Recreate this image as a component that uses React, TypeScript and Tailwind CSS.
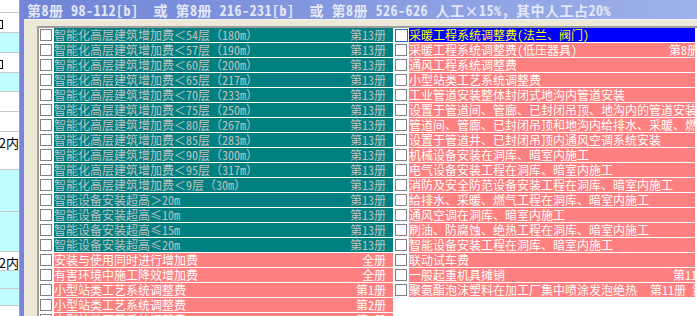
const cjk = "font-['Noto_Sans_Mono_CJK_SC','Noto_Sans_CJK_SC',monospace]";

type Kind = "teal" | "red" | "sel";
type Row = { label: string; tag?: string; kind: Kind; tagClass?: string };

const leftRows: Row[] = [
  { label: "智能化高层建筑增加费＜54层（180m）", tag: "第13册", kind: "teal" },
  { label: "智能化高层建筑增加费＜57层（190m）", tag: "第13册", kind: "teal" },
  { label: "智能化高层建筑增加费＜60层（200m）", tag: "第13册", kind: "teal" },
  { label: "智能化高层建筑增加费＜65层（217m）", tag: "第13册", kind: "teal" },
  { label: "智能化高层建筑增加费＜70层（233m）", tag: "第13册", kind: "teal" },
  { label: "智能化高层建筑增加费＜75层（250m）", tag: "第13册", kind: "teal" },
  { label: "智能化高层建筑增加费＜80层（267m）", tag: "第13册", kind: "teal" },
  { label: "智能化高层建筑增加费＜85层（283m）", tag: "第13册", kind: "teal" },
  { label: "智能化高层建筑增加费＜90层（300m）", tag: "第13册", kind: "teal" },
  { label: "智能化高层建筑增加费＜95层（317m）", tag: "第13册", kind: "teal" },
  { label: "智能化高层建筑增加费＜9层（30m）", tag: "第13册", kind: "teal" },
  { label: "智能设备安装超高＞20m", tag: "第13册", kind: "teal" },
  { label: "智能设备安装超高≤10m", tag: "第13册", kind: "teal" },
  { label: "智能设备安装超高≤15m", tag: "第13册", kind: "teal" },
  { label: "智能设备安装超高≤20m", tag: "第13册", kind: "teal" },
  { label: "安装与使用同时进行增加费", tag: "全册", kind: "red" },
  { label: "有害环境中施工降效增加费", tag: "全册", kind: "red" },
  { label: "小型站类工艺系统调整费", tag: "第1册", kind: "red" },
  { label: "小型站类工艺系统调整费", tag: "第2册", kind: "red" },
  { label: "小型站类工艺系统调整费", tag: "第3册", kind: "red" },
];

const rightRows: Row[] = [
  { label: "采暖工程系统调整费(法兰、阀门)", kind: "sel" },
  { label: "采暖工程系统调整费(低压器具)", tag: "第8册", kind: "red", tagClass: "ml-[92px]" },
  { label: "通风工程系统调整费", kind: "red" },
  { label: "小型站类工艺系统调整费", kind: "red" },
  { label: "工业管道安装整体封闭式地沟内管道安装", kind: "red" },
  { label: "设置于管道间、管廊、已封闭吊顶、地沟内的管道安装", kind: "red" },
  { label: "管道间、管廊、已封闭吊顶和地沟内给排水、采暖、燃气", kind: "red" },
  { label: "设置于管道井、已封闭吊顶内通风空调系统安装", kind: "red" },
  { label: "机械设备安装在洞库、暗室内施工", kind: "red" },
  { label: "电气设备安装工程在洞库、暗室内施工", kind: "red" },
  { label: "消防及安全防范设备安装工程在洞库、暗室内施工", kind: "red" },
  { label: "给排水、采暖、燃气工程在洞库、暗室内施工", kind: "red" },
  { label: "通风空调在洞库、暗室内施工", kind: "red" },
  { label: "刷油、防腐蚀、绝热工程在洞库、暗室内施工", kind: "red" },
  { label: "智能设备安装工程在洞库、暗室内施工", kind: "red" },
  { label: "联动试车费", kind: "red" },
  { label: "一般起重机具摊销", tag: "第11册", kind: "red", tagClass: "ml-[168px]" },
  { label: "聚氨酯泡沫塑料在加工厂集中喷涂发泡绝热", tag: "第11册 第", kind: "red", tagClass: "ml-[13px]" },
];

const sideRows = [
  { h: "h-[13px]", bg: "bg-white" },
  { h: "h-[20px]", bg: "bg-white", icon: true },
  { h: "h-[20px]", bg: "bg-[#c0ffff]" },
  { h: "h-[20px]", bg: "bg-white", icon: true },
  { h: "h-[19px]", bg: "bg-[#c0ffff]" },
  { h: "h-[20px]", bg: "bg-white" },
  { h: "h-[20px]", bg: "bg-white" },
  { h: "h-[38px]", bg: "bg-white", text: "2内" },
  { h: "h-[42px]", bg: "bg-[#c0ffff]" },
  { h: "h-[40px]", bg: "bg-[#c0ffff]" },
  { h: "h-[19px]", bg: "bg-white", text: "2内" },
  { h: "h-[18px]", bg: "bg-[#c0ffff]" },
  { h: "h-[17px]", bg: "bg-[#c0ffff]" },
  { h: "h-[20px]", bg: "bg-white" },
];

const barStyle: Record<Kind, string> = {
  teal: "bg-[#008080] text-[#c0c0c0]",
  red: "bg-[#ff8080] text-white",
  sel: "bg-[#0000ff] text-[#ffff00]",
};

const Check = ({ focused }: { focused?: boolean }) => (
  <div
    className={
      focused
        ? "w-[13px] h-[13px] border border-[#316ac5] bg-white shrink-0"
        : "w-[12px] h-[12px] border border-[#808080] bg-white shrink-0"
    }
  />
);

const LeftItem = ({ row }: { row: Row }) => (
  <div className="flex items-center h-[15px] pb-[1px]">
    <div className="w-[15px] pl-[1px] flex items-center">
      <Check />
    </div>
    <div className={`flex-1 h-[14px] flex items-center justify-between pr-[7px] ${barStyle[row.kind]}`}>
      <span className="whitespace-pre">{row.label}</span>
      <span>{row.tag}</span>
    </div>
  </div>
);

const RightItem = ({ row }: { row: Row }) => (
  <div className="flex items-center h-[15px] pb-[1px]">
    <div className="w-[14px] flex items-center">
      <Check focused={row.kind === "sel"} />
    </div>
    <div className={`flex-1 h-[14px] flex items-center overflow-hidden whitespace-pre ${barStyle[row.kind]}`}>
      <span>{row.label}</span>
      {row.tag && <span className={row.tagClass}>{row.tag}</span>}
    </div>
  </div>
);

export default function App() {
  return (
    <div className="w-[697px] h-[316px] overflow-hidden flex bg-white">
      <div className="w-[20px] shrink-0 overflow-hidden border-r border-[#a0a0a0] font-['Noto_Sans_CJK_SC',sans-serif] text-[13px] text-black">
        {sideRows.map((r, i) => (
          <div key={i} className={`${r.h} ${r.bg} border-b border-[#c8c8c8] relative flex items-start justify-end overflow-hidden`}>
            {r.icon && (
              <div className="absolute left-[-6px] top-[7px] w-[9px] h-[9px] border border-black bg-white flex items-center justify-center text-[8px] leading-none">
                +
              </div>
            )}
            {r.text && <span className="whitespace-nowrap leading-[16px] pt-[3px]">{r.text}</span>}
          </div>
        ))}
      </div>
      <div className="w-[4px] shrink-0 bg-[#7b84dc]" />
      <div className={`flex-1 flex flex-col bg-[#ece9d8] min-w-0 ${cjk}`}>
        <div className="h-[20px] shrink-0 bg-gradient-to-r from-[#6f84d6] to-[#9fb1ea] flex items-center pl-[3px] border-b border-[#f4f4f4]">
          <span className="whitespace-pre text-[14px] font-bold text-[#e2e6f6] leading-none tracking-[0.5px]">
            第8册 98-112[b]  或 第8册 216-231[b]  或 第8册 526-626 人工×15%，其中人工占20%
          </span>
        </div>
        <div className="flex-1 mt-[6px] ml-[13px] border-t-2 border-l-2 border-[#9d9d9d] bg-white overflow-hidden text-[12px] leading-[14px]">
          <div className="flex">
            <div className="w-[354px] shrink-0 flex flex-col">
              {leftRows.map((r, i) => (
                <LeftItem key={i} row={r} />
              ))}
            </div>
            <div className="flex-1 min-w-0 flex flex-col pl-[2px] pr-[2px]">
              {rightRows.map((r, i) => (
                <RightItem key={i} row={r} />
              ))}
            </div>
          </div>
        </div>
      </div>
    </div>
  );
}
